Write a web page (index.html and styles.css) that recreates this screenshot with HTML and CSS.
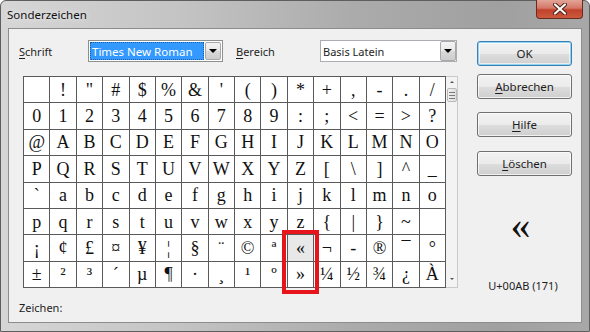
FILE: index.html
```html
<!DOCTYPE html>
<html lang="de">
<head>
    <meta charset="UTF-8">
    <title>Sonderzeichen</title>
    <link rel="stylesheet" href="styles.css">
</head>
<body>
    <!-- Dialogfenster -->
    <div class="window">
        <div class="titlebar">
            <span class="title">Sonderzeichen</span>
            <span class="close">
                <svg width="16" height="12" viewBox="0 0 16 12">
                    <path d="M3 1.5 L13 10.5 M13 1.5 L3 10.5" stroke="#4a1c14" stroke-width="4" stroke-linecap="round"/>
                    <path d="M3 1.5 L13 10.5 M13 1.5 L3 10.5" stroke="#fff" stroke-width="2.2" stroke-linecap="round"/>
                </svg>
            </span>
        </div>

        <div class="client">
            <!-- linke Seite: Auswahl und Zeichentabelle -->
            <div class="left">
                <div class="toolbar">
                    <span class="lbl lbl-font"><u>S</u>chrift</span>
                    <div class="combo combo-font">
                        <span class="combo-text"><span class="sel">Times New Roman</span></span>
                        <span class="combo-btn"><i class="tri"></i></span>
                    </div>
                    <span class="lbl lbl-range"><u>B</u>ereich</span>
                    <div class="combo combo-range">
                        <span class="combo-text">Basis Latein</span>
                        <span class="combo-btn"><i class="tri"></i></span>
                    </div>
                </div>

                <div class="charmap">
                    <div class="chars" id="chars"></div>
                    <div class="scrollbar">
                        <i class="arrow-up"></i>
                        <span class="thumb"><i></i><i></i><i></i></span>
                        <i class="arrow-down"></i>
                    </div>
                    <div class="mark"></div>
                </div>

                <div class="status">Zeichen:</div>
            </div>

            <!-- rechte Seite: Schaltflächen und Vorschau -->
            <div class="right">
                <button class="btn btn-ok">OK</button>
                <button class="btn btn-cancel"><u>A</u>bbrechen</button>
                <button class="btn btn-help"><u>H</u>ilfe</button>
                <button class="btn btn-delete"><u>L</u>öschen</button>
                <div class="preview">«</div>
                <div class="code">U+00AB (171)</div>
            </div>
        </div>
    </div>

    <script>
        var chars = [
            ' ', '!', '"', '#', '$', '%', '&', "'", '(', ')', '*', '+', ',', '-', '.', '/',
            '0', '1', '2', '3', '4', '5', '6', '7', '8', '9', ':', ';', '<', '=', '>', '?',
            '@', 'A', 'B', 'C', 'D', 'E', 'F', 'G', 'H', 'I', 'J', 'K', 'L', 'M', 'N', 'O',
            'P', 'Q', 'R', 'S', 'T', 'U', 'V', 'W', 'X', 'Y', 'Z', '[', '\\', ']', '^', '_',
            '`', 'a', 'b', 'c', 'd', 'e', 'f', 'g', 'h', 'i', 'j', 'k', 'l', 'm', 'n', 'o',
            'p', 'q', 'r', 's', 't', 'u', 'v', 'w', 'x', 'y', 'z', '{', '|', '}', '~', ' ',
            '¡', '¢', '£', '¤', '¥', '¦', '§', '¨', '©', 'ª', '«', '¬', '-', '®', '¯', '°',
            '±', '²', '³', '´', 'µ', '¶', '·', '¸', '¹', 'º', '»', '¼', '½', '¾', '¿', 'À'
        ];
        var grid = document.getElementById('chars');
        chars.forEach(function(c) {
            var cell = document.createElement('span');
            cell.className = 'cell';
            if (c === '«') cell.className += ' current';
            cell.textContent = c;
            grid.appendChild(cell);
        });
    </script>
</body>
</html>
```

FILE: styles.css
```css
* {
    margin: 0;
    padding: 0;
    box-sizing: border-box;
}

body {
    width: 590px;
    height: 332px;
    overflow: hidden;
    font-family: 'Noto Sans', 'Open Sans', sans-serif;
    font-size: 11px;
    color: #1e1e1e;
}

u {
    text-decoration-thickness: 1px;
    text-underline-offset: 2px;
}

/* Fensterrahmen */
.window {
    width: 590px;
    height: 332px;
    display: flex;
    flex-direction: column;
    border: 1px solid #5e5e5e;
    border-radius: 6px 6px 0 0;
    background: linear-gradient(to right, #d6d6d6 0%, #c4c4c4 30%, #ababab 60%, #a0a0a0 85%, #a8a8a8 100%);
    padding: 0 7px 8px 7px;
}

.titlebar {
    height: 27px;
    flex: none;
    display: flex;
    justify-content: space-between;
    align-items: flex-start;
}

.title {
    margin: 6px 0 0 -1px;
    font-size: 11.5px;
    color: #111;
    text-shadow: 0 0 6px rgba(255, 255, 255, 0.9);
}

.close {
    width: 47px;
    height: 19px;
    margin: -1px -1px 0 0;
    display: flex;
    justify-content: center;
    align-items: center;
    border: 1px solid #6b2a20;
    border-top: none;
    border-radius: 0 0 4px 4px;
    background: linear-gradient(to bottom, #e2a597 0%, #d47766 45%, #c2412b 55%, #cb5a3e 100%);
}

.client {
    flex: 1;
    display: flex;
    background-color: #f0f0f0;
    border: 1px solid #8d8d8d;
    padding: 11px 9px 0 10px;
}

.left {
    width: 458px;
}

.toolbar {
    display: flex;
    align-items: center;
    height: 22px;
}

.lbl {
    display: block;
}

.lbl-font {
    width: 69px;
}

.lbl-range {
    width: 84px;
    margin-left: 13px;
}

.combo {
    display: flex;
    height: 22px;
    background: #fff;
    border: 1px solid #8e8f8f;
}

.combo-font {
    width: 135px;
    padding: 1px;
}

.combo-range {
    width: 137px;
    border-color: #abadb3;
}

.combo-text {
    flex: 1;
    display: flex;
    align-items: center;
    padding-left: 2px;
}

.combo-font .combo-text {
    padding: 0;
    background: #3399ff;
    outline: 1px dotted #1c5fa5;
    outline-offset: -1px;
}

.combo-font .sel {
    color: #fff;
    padding-left: 2px;
    font-size: 11.5px;
}

.combo-btn {
    width: 16px;
    display: flex;
    justify-content: center;
    align-items: center;
    border: 1px solid #a8a8a8;
    border-radius: 2px;
    background: linear-gradient(to bottom, #f4f4f4 0%, #e8e8e8 50%, #d9d9d9 51%, #cdcdcd 100%);
    margin-left: 1px;
}

.combo-range .combo-btn {
    margin: 0;
}

.tri {
    width: 0;
    height: 0;
    border-left: 4px solid transparent;
    border-right: 4px solid transparent;
    border-top: 4px solid #000;
}

/* Zeichentabelle */
.charmap {
    position: relative;
    display: flex;
    margin: 14px 0 0 4px;
    height: 212px;
}

.chars {
    width: 423px;
    height: 212px;
    display: grid;
    grid-template-columns: repeat(16, 1fr);
    grid-template-rows: repeat(8, 1fr);
    gap: 1px;
    padding: 1px;
    background-color: #5a5a5a;
}

.cell {
    background-color: #fff;
    display: flex;
    justify-content: center;
    align-items: center;
    font-family: 'Liberation Serif', 'Times New Roman', serif;
    font-size: 18px;
    color: #111;
    line-height: 1;
}

.cell.current {
    background-color: #e8e8e8;
}

.scrollbar {
    width: 12px;
    height: 212px;
    display: flex;
    flex-direction: column;
    align-items: center;
    background-color: #f3f3f3;
    border: 1px solid #c9c9c9;
    border-left: none;
}

.arrow-up,
.arrow-down {
    width: 0;
    height: 0;
    border-left: 2px solid transparent;
    border-right: 2px solid transparent;
}

.arrow-up {
    border-bottom: 2px solid #555;
    margin-top: 4px;
}

.arrow-down {
    border-top: 2px solid #555;
    margin-top: auto;
    margin-bottom: 7px;
}

.thumb {
    width: 10px;
    height: 14px;
    margin-top: 5px;
    display: flex;
    flex-direction: column;
    justify-content: center;
    align-items: center;
    gap: 2px;
    border: 1px solid #b8b8b8;
    border-radius: 2px;
    background: linear-gradient(to right, #f2f2f2, #dedede);
}

.thumb i {
    width: 6px;
    height: 1px;
    background-color: #7a7a7a;
}

/* rote Markierung */
.mark {
    position: absolute;
    left: 259px;
    top: 154px;
    width: 37px;
    height: 64px;
    border: 4px solid #e8141b;
}

.status {
    margin-top: 12px;
}

/* Schaltflächen */
.right {
    width: 95px;
    margin-left: 10px;
    display: flex;
    flex-direction: column;
}

.btn {
    height: 25px;
    width: 95px;
    font-family: inherit;
    font-size: 11.5px;
    color: #1e1e1e;
    border: 1px solid #707070;
    border-radius: 3px;
    background: linear-gradient(to bottom, #f2f2f2 0%, #ebebeb 50%, #dddddd 51%, #cfcfcf 100%);
    box-shadow: inset 0 0 0 1px rgba(255, 255, 255, 0.7);
}

.btn-ok {
    margin-top: 1px;
    border-color: #3c7fb1;
    box-shadow: inset 0 0 0 1px #8fd3f3, inset 0 0 0 2px rgba(255, 255, 255, 0.6);
}

.btn-cancel {
    margin-top: 8px;
}

.btn-help {
    margin-top: 13px;
}

.btn-delete {
    margin-top: 14px;
}

.preview {
    margin-top: 22px;
    height: 56px;
    padding-right: 8px;
    text-align: center;
    font-family: 'Liberation Serif', 'Times New Roman', serif;
    font-size: 40px;
    line-height: 54px;
    color: #111;
}

.code {
    margin-top: 24px;
    text-align: center;
    padding-right: 3px;
}
```
